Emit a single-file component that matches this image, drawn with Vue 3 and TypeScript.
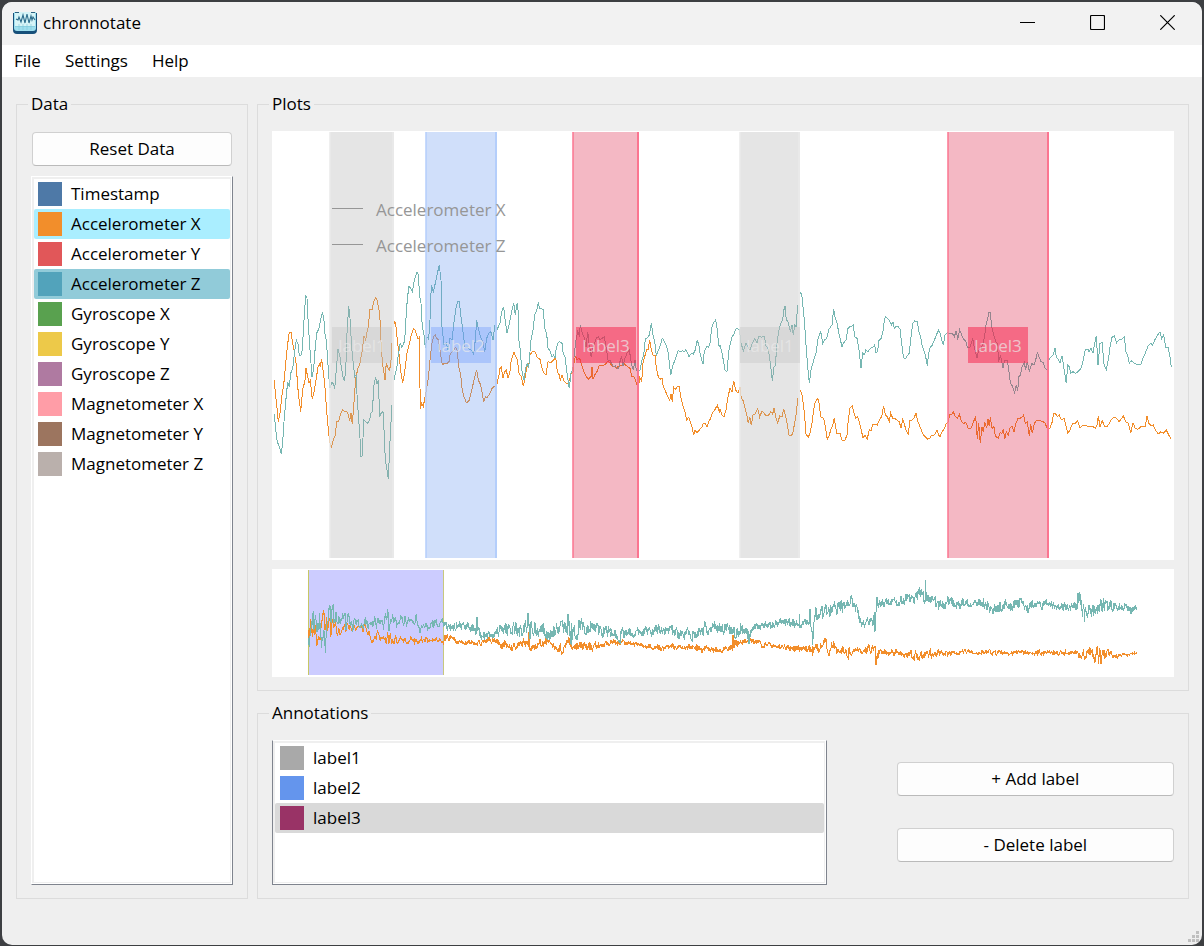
<script setup lang="ts">
import { ref } from 'vue'

interface Item {
  name: string
  color: string
}
interface Region {
  label: string
  x: number
  width: number
  boxX: number
  color: string
  edge: string
  box: string
  boxOpacity: number
}
type Point = [number, number]

const channels: Item[] = [
  { name: 'Timestamp', color: '#4e79a7' },
  { name: 'Accelerometer X', color: '#f28e2b' },
  { name: 'Accelerometer Y', color: '#e15759' },
  { name: 'Accelerometer Z', color: '#52a3bb' },
  { name: 'Gyroscope X', color: '#59a14f' },
  { name: 'Gyroscope Y', color: '#edc949' },
  { name: 'Gyroscope Z', color: '#af7aa1' },
  { name: 'Magnetometer X', color: '#ff9da7' },
  { name: 'Magnetometer Y', color: '#9c755f' },
  { name: 'Magnetometer Z', color: '#bab0ac' },
]
const labels: Item[] = [
  { name: 'label1', color: '#a9a9a9' },
  { name: 'label2', color: '#6495ed' },
  { name: 'label3', color: '#993366' },
]
const selectedChannels = ref<string[]>(['Accelerometer X', 'Accelerometer Z'])
const currentChannel = ref('Accelerometer Z')
const selectedLabel = ref('label3')

function toggleChannel(name: string) {
  currentChannel.value = name
  selectedChannels.value = selectedChannels.value.includes(name)
    ? selectedChannels.value.filter((n) => n !== name)
    : [...selectedChannels.value, name]
}

const grey = { color: '#a9a9a9', edge: '#e9e9e9', box: '#c0c0c0', boxOpacity: 0.35 }
const blue = { color: '#6495ed', edge: '#b4cefb', box: '#6f9cfc', boxOpacity: 0.38 }
const red = { color: '#dc143c', edge: '#fb7590', box: '#f62850', boxOpacity: 0.54 }
const regions: Region[] = [
  { label: 'label1', x: 58, width: 63, boxX: 60, ...grey },
  { label: 'label2', x: 154, width: 70, boxX: 159, ...blue },
  { label: 'label3', x: 301, width: 65, boxX: 304, ...red },
  { label: 'label1', x: 468, width: 59, boxX: 468, ...grey },
  { label: 'label3', x: 676, width: 100, boxX: 696, ...red },
]

// Samples are stored in blocks at three units per plot unit; each block has its own start.
const blockStart = [-2, 218, 438, 668]
const xBlocks = [
  '13,360 16,400 20,435 25,485 30,460 36,405 41,375 47,310 52,260 58,217 63,217 68,250 73,275 78,310 85,400 92,455 96,410 100,378 104,370 108,325 112,345 117,368 121,362 127,418 132,395 138,360 144,322 148,312 151,318 155,298 159,330 164,370 170,455 176,520 180,550 184,562 190,540 196,525 200,483 206,483 212,460 218,449 224,455 230,453 234,462 239,482 243,458 247,493 251,440 254,395 258,350 264,325 270,310 276,275 282,228 287,240 291,215 295,200 300,148 306,150 311,125 317,112 322,122 327,150 331,190 334,270 339,320 345,360 349,308 354,325 358,330 362,315 366,250 370,205 374,182 378,200 382,240 388,290 393,340 398,370 404,335 411,280 417,255 424,225 430,206 436,210 440,225 444,238 448,232 451,448 455,430 460,440 465,410 470,385 476,345 481,290 486,250 491,228 496,225 500,235 505,240 510,270 517,315 523,310 530,312 537,305 541,280 548,275 557,262 562,272 566,320 572,345 576,385 582,410 589,427 596,425 602,402 608,378 614,350 620,330 625,360 631,372 636,395 641,427 646,410 652,412 660,400 666,385 672,380 679,382 683,360 687,346',
  '30,325 34,322 39,355 44,335 49,330 54,355 59,340 64,300 72,277 77,290 82,298 87,340 94,350 100,378 106,350 110,322 116,318 120,285 127,275 135,275 142,292 150,298 156,325 162,340 168,345 174,305 182,308 190,300 197,293 202,335 208,345 211,362 216,345 222,362 228,370 234,370 240,355 244,338 250,335 253,300 257,290 262,300 267,295 271,300 277,322 283,338 289,350 296,357 303,350 306,320 309,358 314,345 322,333 328,315 335,315 343,315 350,308 355,302 360,310 367,318 373,320 379,325 386,318 395,315 402,310 410,318 416,322 420,325 425,350 431,350 436,358 441,375 445,385 449,352 455,365 459,310 464,290 470,268 474,270 479,240 484,270 489,285 495,285 499,325 505,350 510,358 516,355 520,380 527,395 533,410 539,422 543,402 547,425 551,382 556,388 562,380 568,380 573,415 580,440 585,455 590,480 596,472 602,490 606,500 611,525 615,510 621,518 628,510 636,500 640,490 646,490 651,500 656,485 662,475 667,460 674,450 682,436 689,458',
  '30,448 36,465 42,470 48,450 54,410 60,385 66,395 71,362 77,390 84,400 90,382 94,415 100,422 105,445 110,462 115,490 119,470 124,495 129,465 135,462 143,445 149,472 156,452 162,460 168,468 176,465 182,455 188,462 192,443 197,470 203,490 209,468 216,470 221,446 227,470 231,490 237,525 243,528 248,520 253,495 258,465 262,430 267,390 271,390 276,405 281,440 284,470 288,522 295,532 300,520 306,490 311,450 316,425 323,415 327,430 332,470 341,475 346,500 352,538 358,525 362,510 367,500 373,475 380,520 390,520 397,543 405,540 411,525 415,480 420,445 427,438 431,455 437,475 443,470 449,490 454,510 459,535 465,525 472,537 478,508 483,512 488,492 495,492 502,495 508,480 515,470 521,437 526,465 532,470 538,485 542,460 548,475 554,475 560,480 568,485 573,505 578,478 583,492 588,510 595,522 600,480 606,480 612,475 618,458 622,480 628,495 634,510 640,525 646,530 653,538 660,535 664,525 670,528 676,522 681,510 686,525',
  '0,530 6,515 12,508 18,492 25,485 29,463 35,463 40,455 46,470 52,475 58,462 63,480 69,490 78,488 85,505 93,505 99,490 107,468 112,538 116,488 121,550 126,500 130,515 134,485 140,505 144,478 148,498 151,472 156,505 162,500 166,528 175,535 180,518 186,520 190,508 194,537 199,515 205,525 210,505 216,498 222,515 228,490 234,475 240,475 246,472 251,465 256,490 262,485 268,528 272,492 277,520 283,490 289,482 298,480 308,485 315,488 323,510 330,505 337,485 341,460 346,460 352,470 358,465 364,480 372,475 376,490 383,520 390,510 397,492 406,490 413,482 420,505 430,495 440,498 450,500 459,500 466,505 471,495 475,468 480,500 487,482 494,500 501,500 508,490 514,478 522,472 530,475 537,485 545,475 550,467 557,485 565,490 572,520 579,488 586,505 594,508 602,500 610,498 616,500 621,468 626,490 634,498 640,495 646,510 655,522 662,515 670,520 679,510 686,525 694,538',
]
const zBlocks = [
  '13,462 17,510 22,545 28,560 34,583 38,545 42,485 47,425 53,365 58,380 62,340 68,325 74,272 79,240 84,252 88,285 93,285 97,270 101,195 107,105 111,115 115,195 120,270 126,350 131,325 136,260 140,220 147,205 153,175 157,160 161,172 165,222 169,240 173,300 178,370 180,385 185,368 190,370 194,388 198,340 204,268 209,285 214,320 219,350 223,362 227,335 231,220 236,137 240,175 245,265 250,310 254,350 258,345 262,420 266,480 270,535 273,590 277,588 281,480 287,485 294,490 299,480 303,458 307,455 312,375 317,352 321,372 325,360 329,470 334,458 339,455 342,510 346,600 350,622 355,658 359,560 364,470 370,370 375,345 380,325 385,285 391,248 395,260 400,255 404,240 410,140 416,80 421,82 427,95 433,60 441,35 445,45 449,110 453,130 457,200 462,225 466,265 471,230 476,237 480,180 484,75 490,95 496,70 502,40 508,16 513,60 516,200 522,255 529,248 534,270 540,235 546,240 552,185 558,145 563,125 568,125 573,170 579,215 585,262 591,262 597,268 604,270 611,282 616,240 620,180 626,210 633,235 639,245 644,275 650,235 657,218 663,215 669,240 675,195 682,208 689,190',
  '30,188 35,155 41,140 46,185 51,218 56,200 61,175 66,150 71,128 76,165 79,145 82,128 85,160 86,235 91,270 95,330 102,360 108,320 112,312 116,325 120,275 123,240 129,210 134,165 140,150 145,130 149,145 160,148 164,205 170,222 174,265 180,272 186,292 191,285 195,295 199,265 203,250 209,245 216,250 220,282 226,292 229,325 234,360 238,385 243,340 248,330 254,270 258,240 263,215 268,225 271,195 277,220 282,230 288,262 293,215 298,255 304,292 309,262 314,250 319,235 325,230 330,240 336,235 343,230 349,265 354,300 360,300 364,310 371,320 376,318 381,325 386,325 391,300 395,290 399,318 405,295 411,280 418,270 425,315 430,330 435,300 439,330 445,333 450,330 456,300 461,285 466,238 473,232 478,225 484,190 489,225 494,245 499,285 505,272 511,255 517,235 522,242 528,255 534,275 537,300 542,345 547,322 553,305 558,290 564,272 571,275 577,272 583,275 587,270 592,278 597,290 604,280 610,282 616,270 622,240 627,258 631,285 639,312 643,275 651,258 656,262 660,250 665,205 670,190 677,180 682,210 686,255 689,258',
  '30,256 35,275 40,300 45,330 51,335 56,275 61,250 66,232 72,222 78,206 88,208 93,250 100,272 108,250 114,262 120,270 127,250 134,235 141,248 147,228 154,232 159,228 163,228 168,258 173,262 178,285 182,320 187,363 192,322 196,318 201,250 206,215 212,190 218,180 221,152 225,137 229,180 234,185 241,215 246,195 250,225 254,195 258,200 262,150 266,118 271,98 275,100 279,140 283,180 288,255 293,320 298,370 303,330 308,312 314,290 319,275 323,240 332,215 338,250 344,240 350,235 357,208 362,200 366,195 371,147 376,175 380,185 388,225 396,260 401,248 408,240 414,205 420,200 425,198 430,195 434,230 441,235 446,262 453,325 458,280 464,285 467,270 474,275 481,265 488,262 494,255 498,278 503,275 506,242 514,235 520,210 523,180 526,170 532,175 538,180 544,195 549,185 553,205 558,200 563,198 570,208 574,240 580,290 585,298 590,290 598,280 602,240 608,190 614,183 622,185 627,215 632,230 637,260 642,272 647,290 652,318 656,280 661,262 667,255 674,238 680,222 686,210',
  '0,218 5,240 10,255 15,225 22,218 30,222 37,220 43,230 49,212 53,240 59,210 65,225 71,238 78,245 82,262 90,262 98,235 103,262 111,295 116,270 122,268 130,250 135,220 138,195 143,175 147,157 151,158 155,200 161,225 167,245 172,250 176,300 182,288 189,325 194,300 202,300 206,330 211,368 218,380 224,398 229,375 233,392 237,350 241,345 247,318 253,308 257,330 262,305 268,335 275,310 282,315 287,300 292,278 297,290 303,305 310,308 315,325 321,330 326,300 333,290 340,285 345,265 349,292 356,300 360,308 366,288 371,320 379,370 383,315 388,320 392,340 399,335 406,340 414,335 423,325 430,300 436,270 444,268 447,275 453,265 459,280 464,250 469,228 474,315 480,250 487,248 491,310 499,330 505,300 510,262 516,232 523,228 530,248 536,240 545,238 553,230 558,275 563,285 568,310 573,302 581,308 590,313 603,312 609,295 616,280 624,258 632,250 638,255 644,240 650,230 655,222 660,215 665,235 671,225 677,262 684,262 689,285 694,320',
]

function decode(blocks: string[]): Point[] {
  return blocks.flatMap((block, i) =>
    block.split(' ').map((pair): Point => {
      const [x, y] = pair.split(',').map(Number)
      return [blockStart[i] + x / 3, 129 + y / 3]
    }),
  )
}
const toPath = (pts: Point[]) => pts.map(([x, y]) => x.toFixed(1) + ',' + y.toFixed(1)).join(' ')

const seriesX = decode(xBlocks)
const seriesZ = decode(zBlocks)

// Remainder of the recording: x, mean level and spread, followed by single peaks.
const trendX = '173,69,3 180,69,2 186,74,2 208,74,2 218,71,2 228,75,4 243,78,3 253,73,4 259,80,3 266,77,4 273,71,5 279,76,3 290,80,4 297,73,5 303,77,3 318,76,4 333,76,3 343,73,2 358,74,2 373,77,2 388,79,2 413,78,2 428,80,3 458,80,3 460,80,3 462,73,4 468,74,2 478,72,3 493,76,3 508,78,2 528,80,3 540,80,4 548,81,4 553,72,4 557,83,3 561,72,5 566,85,3 570,79,4 576,84,4 586,81,3 601,80,4 605,86,5 608,83,3 623,83,3 633,86,3 640,86,4 648,89,4 653,85,4 668,83,3 688,83,2 728,84,2 763,84,2 803,84,2 810,86,5 818,83,5 828,88,8 835,84,4 843,87,2 865,84,1'
const trendZ = '173,57,4 198,58,3 206,60,5 208,67,5 220,67,3 228,60,6 240,59,6 250,64,7 256,59,10 268,58,7 277,67,6 284,59,6 295,59,9 299,64,10 308,58,7 318,59,6 328,61,6 338,65,5 348,66,6 358,62,4 373,63,5 388,61,5 413,65,5 428,62,6 443,59,6 458,61,6 468,62,6 476,65,7 481,58,4 498,56,3 513,53,4 523,55,5 538,55,5 541,62,9 543,45,6 550,49,8 554,41,6 563,39,6 570,35,7 573,41,5 578,34,6 585,39,5 589,55,6 596,53,4 602,53,6 605,33,6 613,32,4 628,32,4 643,29,5 651,25,9 658,30,4 668,35,5 680,33,5 693,35,4 713,34,5 720,40,5 733,36,5 748,35,6 756,39,5 763,35,4 788,37,4 803,38,4 808,33,8 813,44,8 820,41,8 833,36,6 848,37,4 860,41,4 865,39,1'
const peaksX: Point[] = [[257, 63], [461, 66], [540, 87], [604, 96], [828, 95]]
const peaksZ: Point[] = [[205, 48], [256, 44], [296, 45], [299, 76], [477, 75], [527, 45], [538, 40], [540, 76], [603, 63], [653, 11], [806, 24], [812, 53]]

function overview(series: Point[], trend: string, peaks: Point[], start: number): Point[] {
  const head = series.map(([x, y]): Point => [36 + (x * 136) / 902, 35 + (y - 134) * 0.228])
  const knots = trend.split(' ').map((k) => k.split(',').map(Number))
  const tail: Point[] = []
  let seed = start
  let wander = 0
  const noise = () => {
    seed = (seed * 16807) % 2147483647
    return (seed / 2147483647) * 2 - 1
  }
  for (let i = 0; i < knots.length - 1; i++) {
    const [x0, y0, a0] = knots[i]
    const [x1, y1, a1] = knots[i + 1]
    for (let x = x0; x < x1; x += 0.4) {
      const t = (x - x0) / (x1 - x0)
      wander = wander * 0.4 + noise()
      tail.push([x, y0 + (y1 - y0) * t + wander * (a0 + (a1 - a0) * t)])
    }
  }
  for (const peak of peaks) {
    const at = tail.findIndex(([x]) => x >= peak[0])
    tail[at] = peak
  }
  return [...head, ...tail]
}

const mainX = toPath(seriesX)
const mainZ = toPath(seriesZ)
const overviewX = toPath(overview(seriesX, trendX, peaksX, 4211))
const overviewZ = toPath(overview(seriesZ, trendZ, peaksZ, 977))
</script>

<template>
  <div class="desktop">
    <div class="window">
      <header class="titlebar">
        <svg class="app-icon" viewBox="0 0 24 24" aria-hidden="true">
          <path d="M0 2h24v17q0 4-4 4H4q-4 0-4-4z" fill="#17507a" />
          <path d="M1 1h22v16q0 3-3 3H4q-3 0-3-3z" fill="#9edfee" />
          <path d="M2 1h20v14H2z" fill="#d6f4f7" />
          <path d="M2 15.5h20M6 13v6M10 13v6M14 13v6M18 13v6" stroke="#7cc8d9" stroke-width=".6" />
          <path d="M2 1.5h4M18 1.5h4" stroke="#2b6180" />
          <path d="M3 8l2 1 1-3 2 5 2-7 2 8 2-9 2 9 2-7 1 4 1-3 2 3" fill="none" stroke="#2c6c8c" stroke-width="1.1" />
        </svg>
        <h1 class="title">chronnotate</h1>
        <div class="controls">
          <button type="button" aria-label="Minimize">
            <svg viewBox="0 0 15 15"><path d="M0 7.5h15" /></svg>
          </button>
          <button type="button" aria-label="Maximize">
            <svg viewBox="0 0 15 15"><rect x=".5" y=".5" width="14" height="14" rx="1" /></svg>
          </button>
          <button type="button" aria-label="Close">
            <svg viewBox="0 0 15 15"><path d="M.3.3l14.4 14.4M14.7.3L.3 14.7" /></svg>
          </button>
        </div>
      </header>

      <nav class="menubar">
        <button type="button">File</button>
        <button type="button">Settings</button>
        <button type="button">Help</button>
      </nav>

      <main class="content">
        <fieldset class="group data">
          <legend>Data</legend>
          <div class="data-body">
            <button type="button" class="push reset">Reset Data</button>
            <ul class="list channels">
              <li v-for="c in channels" :key="c.name">
                <button
                  type="button"
                  class="row"
                  :class="{ picked: selectedChannels.includes(c.name), current: currentChannel === c.name && selectedChannels.includes(c.name) }"
                  :aria-pressed="selectedChannels.includes(c.name)"
                  @click="toggleChannel(c.name)"
                >
                  <span class="swatch" :style="{ background: c.color }"></span>{{ c.name }}
                </button>
              </li>
            </ul>
          </div>
        </fieldset>

        <div class="right">
          <fieldset class="group">
            <legend>Plots</legend>
            <div class="plots">
              <svg class="plot" viewBox="0 0 902 429" role="img" aria-label="Signal plot">
                <g class="signal">
                  <polyline :points="mainX" class="orange" />
                  <polyline :points="mainZ" class="teal" />
                </g>
                <g v-for="(r, i) in regions" :key="i">
                  <g class="region">
                    <rect :x="r.x" y="1" :width="r.width" height="426" :fill="r.color" fill-opacity=".3" />
                    <rect :x="r.x - 1" y="1" width="2" height="426" :fill="r.edge" fill-opacity=".75" />
                    <rect :x="r.x + r.width - 1" y="1" width="2" height="426" :fill="r.edge" />
                    <rect :x="r.boxX" y="196" width="60" height="36" :fill="r.box" :fill-opacity="r.boxOpacity" />
                  </g>
                  <text :x="r.boxX + 30" y="221" class="tag" text-anchor="middle">{{ r.label }}</text>
                </g>
                <g class="legend">
                  <path d="M60 77.5h31M60 113.5h31" />
                  <text x="104" y="85">Accelerometer X</text>
                  <text x="104" y="121">Accelerometer Z</text>
                </g>
              </svg>
              <svg class="plot" viewBox="0 0 902 108" role="img" aria-label="Overview plot">
                <g class="region">
                  <rect x="36" y="1" width="136" height="105" fill="#ccccff" />
                  <rect x="36" y="1" width="1" height="105" fill="#c8c864" />
                  <rect x="171" y="1" width="1" height="105" fill="#c8c87d" />
                </g>
                <g class="signal">
                  <polyline :points="overviewX" class="orange" />
                  <polyline :points="overviewZ" class="teal" />
                </g>
              </svg>
            </div>
          </fieldset>

          <fieldset class="group">
            <legend>Annotations</legend>
            <div class="annotations">
              <ul class="list labels">
                <li v-for="l in labels" :key="l.name">
                  <button
                    type="button"
                    class="row"
                    :class="{ chosen: selectedLabel === l.name }"
                    :aria-pressed="selectedLabel === l.name"
                    @click="selectedLabel = l.name"
                  >
                    <span class="swatch" :style="{ background: l.color }"></span>{{ l.name }}
                  </button>
                </li>
              </ul>
              <div class="actions">
                <button type="button" class="push">+ Add label</button>
                <button type="button" class="push">- Delete label</button>
              </div>
            </div>
          </fieldset>
        </div>
      </main>

      <svg class="grip" viewBox="0 0 12 12" aria-hidden="true">
        <path d="M8 0h3v3H8zM4 4h3v3H4zM8 4h3v3H8zM0 8h3v3H0zM4 8h3v3H4zM8 8h3v3H8z" />
      </svg>
    </div>
  </div>
</template>

<style>
body {
  margin: 0;
  background: #3d3f42;
}
</style>

<style scoped>
.desktop {
  box-sizing: border-box;
  min-height: 100vh;
  padding: 2px 2px 1px;
  display: flex;
  background: #3d3f42;
  font-family: "Open Sans", "Noto Sans", sans-serif;
  font-size: 17px;
  line-height: 24px;
  color: #000;
}
.window {
  position: relative;
  flex: 1;
  min-width: 0;
  display: flex;
  flex-direction: column;
  overflow: hidden;
  border-radius: 10px;
  background: #efefef;
}
button {
  margin: 0;
  border: 0;
  padding: 0;
  background: none;
  font: inherit;
  color: inherit;
}
.titlebar {
  display: flex;
  align-items: center;
  height: 41px;
  padding: 0 0 2px 11px;
  background: #f2f2f2;
}
.app-icon {
  width: 24px;
  height: 24px;
}
.title {
  margin: 0 0 0 6px;
  font-size: 17px;
  font-weight: 400;
}
.controls {
  display: flex;
  margin-left: auto;
}
.controls button {
  display: grid;
  place-items: center start;
  width: 70px;
  height: 41px;
  padding-left: 28px;
}
.controls svg {
  width: 15px;
  height: 15px;
  fill: none;
  stroke: #000;
  stroke-width: 1.2;
}
.menubar {
  display: flex;
  height: 32px;
  background: #fff;
}
.menubar button {
  padding: 0 12px;
}
.content {
  display: grid;
  grid-template-columns: 232px minmax(0, 1fr);
  gap: 9px;
  padding: 15px 13px 0 14px;
}
.right {
  display: flex;
  flex-direction: column;
  gap: 10px;
}
.group {
  min-width: 0;
  margin: 0;
  padding: 15px 14px 13px;
  border: 1px solid #dcdcdc;
}
.group legend {
  margin-left: -3px;
  padding: 0 3px;
}
.data {
  display: flex;
}
.data-body {
  flex: 1;
  min-width: 0;
  height: 100%;
  display: flex;
  flex-direction: column;
  gap: 10px;
}
.push {
  height: 34px;
  border: 1px solid #d0d0d0;
  border-bottom-color: #bababa;
  border-radius: 4px;
  background: #fdfdfd;
}
.reset {
  margin: 1px 1px 0;
}
.list {
  box-sizing: border-box;
  margin: 0;
  padding: 2px;
  list-style: none;
  border: 1px solid #7f848e;
  border-top-color: #fff;
  background: #fff;
  box-shadow: inset -1px -1px 0 #fff, inset -2px -2px 0 #efefef, inset 2px 2px 0 #efefef;
}
.channels {
  flex: 1;
  border-left-color: #fff;
}
.labels {
  min-height: 145px;
}
.row {
  display: flex;
  align-items: center;
  gap: 9px;
  width: 100%;
  height: 30px;
  padding: 0 4px;
  border-radius: 2px;
  text-align: left;
}
.labels .row {
  padding: 0 5px;
}
.swatch {
  width: 24px;
  height: 24px;
}
.picked {
  background: #aaeeff;
}
.current {
  background: #91cbd9;
}
.chosen {
  background: #d9d9d9;
}
.plots {
  display: flex;
  flex-direction: column;
  gap: 9px;
}
.plot {
  display: block;
  width: 100%;
  height: auto;
  background: #fff;
}
.signal,
.region {
  shape-rendering: crispEdges;
}
.signal polyline {
  fill: none;
  stroke-width: 1;
}
.orange {
  stroke: #f28e2b;
}
.teal {
  stroke: #76b7b2;
}
.tag {
  font-size: 17px;
  fill: #eaeaea;
  fill-opacity: .7;
}
.legend text {
  font-size: 17px;
  fill: #969696;
}
.legend path {
  stroke: #969696;
  shape-rendering: crispEdges;
}
.annotations {
  display: grid;
  grid-template-columns: minmax(0, 2fr) minmax(0, 1fr);
  column-gap: 70px;
}
.actions {
  display: grid;
  align-content: start;
  gap: 32px;
  padding-top: 22px;
}
.grip {
  position: absolute;
  right: 2px;
  bottom: 2px;
  width: 12px;
  height: 12px;
  fill: #bfbfbf;
}
</style>
